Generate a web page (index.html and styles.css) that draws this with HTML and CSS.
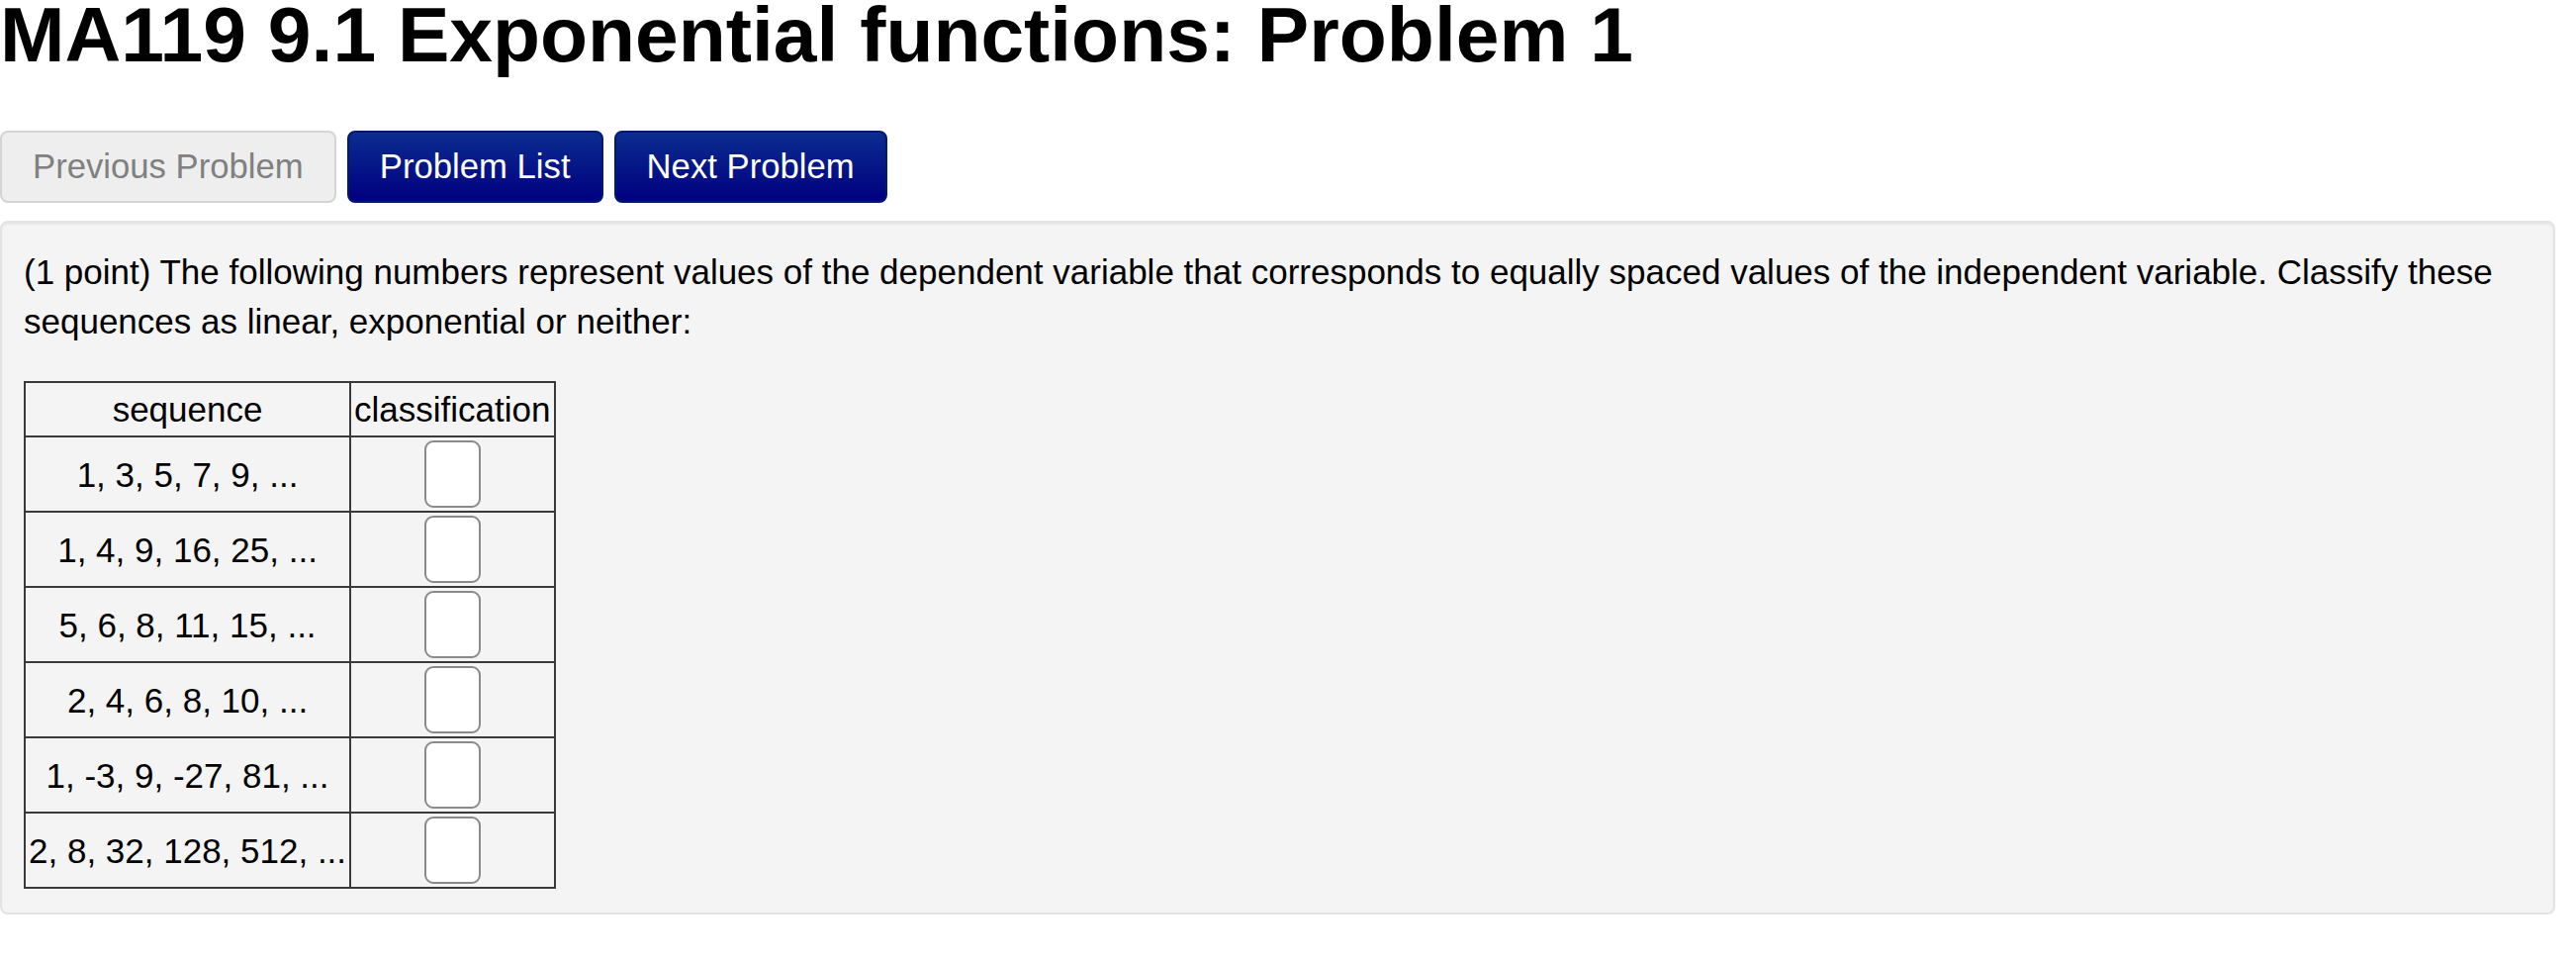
FILE: index.html
```html
<!DOCTYPE html>
<html lang="en">
<head>
  <meta charset="UTF-8">
  <title>MA119 9.1 Exponential functions: Problem 1</title>
  <link rel="stylesheet" href="styles.css">
</head>
<body>
  <h1 class="problem-title">MA119 9.1 Exponential functions: Problem 1</h1>

  <!-- Problem navigation -->
  <div class="nav-buttons">
    <button class="nav-btn disabled">Previous Problem</button>
    <button class="nav-btn primary">Problem List</button>
    <button class="nav-btn primary">Next Problem</button>
  </div>

  <div class="problem-box">
    <p class="problem-text">(1 point) The following numbers represent values of the dependent variable that corresponds to equally spaced values of the independent variable. Classify these sequences as linear, exponential or neither:</p>

    <table class="seq-table">
      <tr>
        <th>sequence</th>
        <th>classification</th>
      </tr>
      <tr>
        <td>1, 3, 5, 7, 9, ...</td>
        <td><input type="text" class="answer"></td>
      </tr>
      <tr>
        <td>1, 4, 9, 16, 25, ...</td>
        <td><input type="text" class="answer"></td>
      </tr>
      <tr>
        <td>5, 6, 8, 11, 15, ...</td>
        <td><input type="text" class="answer"></td>
      </tr>
      <tr>
        <td>2, 4, 6, 8, 10, ...</td>
        <td><input type="text" class="answer"></td>
      </tr>
      <tr>
        <td>1, -3, 9, -27, 81, ...</td>
        <td><input type="text" class="answer"></td>
      </tr>
      <tr>
        <td>2, 8, 32, 128, 512, ...</td>
        <td><input type="text" class="answer"></td>
      </tr>
    </table>
  </div>
</body>
</html>
```

FILE: styles.css
```css
body {
  margin: 0;
  font-family: "Liberation Sans", Arial, sans-serif;
  font-size: 35px;
  line-height: 50px;
  color: #000;
  background-color: #fff;
}

.problem-title {
  font-size: 78.6px;
  font-weight: bold;
  line-height: 70px;
  margin: 0 0 62px 0;
}

/* Navigation buttons */
.nav-buttons {
  display: flex;
  gap: 11px;
}

.nav-btn {
  font-family: inherit;
  font-size: 34.7px;
  line-height: 49px;
  padding: 10px 31px;
  border-radius: 8px;
  border: 2px solid;
}

.nav-btn.disabled {
  background-color: #eeeeee;
  border-color: #d4d4d4;
  color: #808080;
}

.nav-btn.primary {
  background: linear-gradient(#0b2c8f, #00007f);
  border-color: #001a66;
  color: #fff;
  cursor: pointer;
}

/* Problem well */
.problem-box {
  margin: 18px 21px 0 0;
  padding: 25px 22px 24px 22px;
  background-color: #f4f4f4;
  border: 2px solid #e3e3e3;
  border-radius: 8px;
  box-shadow: inset 0 2px 2px rgba(0, 0, 0, 0.05);
}

.problem-text {
  margin: 0 0 35px 0;
}

.seq-table {
  border-collapse: collapse;
  border: 2px solid #3a3a3a;
}

.seq-table th,
.seq-table td {
  border: 2px solid #3a3a3a;
  padding: 2px 3px;
  text-align: center;
  font-weight: normal;
  line-height: 49px;
}

.seq-table td {
  padding: 3px 3px;
}

.answer {
  display: block;
  margin: 0 auto;
  width: 57px;
  height: 68px;
  box-sizing: border-box;
  background-color: #fff;
  border: 2px solid #8a8a8a;
  border-radius: 9px;
  padding: 0;
}
```
